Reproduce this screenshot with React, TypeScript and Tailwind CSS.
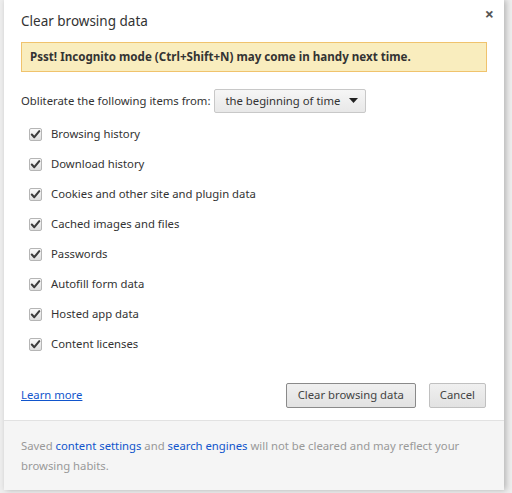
import React from 'react';

const items = [
  'Browsing history',
  'Download history',
  'Cookies and other site and plugin data',
  'Cached images and files',
  'Passwords',
  'Autofill form data',
  'Hosted app data',
  'Content licenses',
];

function CheckBox() {
  return (
    <span className="w-[13px] h-[13px] rounded-[2px] border border-[#b5b5b5] bg-gradient-to-b from-[#fafafa] to-[#dedede] flex items-center justify-center shrink-0">
      <svg width="11" height="11" viewBox="0 0 11 11">
        <path d="M1.8 5.6 L4.3 8.2 L9.3 2.2" fill="none" stroke="#3c3c3c" strokeWidth="2.1" strokeLinecap="round" strokeLinejoin="round" />
      </svg>
    </span>
  );
}

export default function App() {
  return (
    <div
      className="w-[512px] h-[493px] bg-[#eeeeee] pl-[4px] pb-[3px] overflow-hidden text-[11.3px] text-[#333]"
      style={{ fontFamily: '"Segoe UI", "Noto Sans", sans-serif' }}
    >
      <div className="w-[500px] h-[490px] bg-white flex flex-col shadow-[2px_0_6px_rgba(0,0,0,0.25)]">
        <div className="flex-1 px-[17px] pt-[9px] relative">
          <div className="text-[13.5px] text-[#333] leading-[24px]">Clear browsing data</div>
          <button className="absolute right-[10px] top-[6px] text-[#555] text-[16px] font-bold leading-none">×</button>

          <div className="mt-[9px] h-[30px] bg-[#f9edbe] border border-[#f0c36d] px-[8px] flex items-center font-bold text-[11.6px] text-[#333]">
            Psst! Incognito mode (Ctrl+Shift+N) may come in handy next time.
          </div>

          <div className="mt-[17px] flex items-center gap-[4px]">
            <span>Obliterate the following items from:</span>
            <div className="h-[24px] w-[152px] border border-[#c8c8c8] rounded-[2px] bg-gradient-to-b from-[#f6f6f6] to-[#e8e8e8] flex items-center pl-[10px] pr-[7px] justify-between">
              <span>the beginning of time</span>
              <svg width="9" height="6" viewBox="0 0 9 6">
                <path d="M0 0 L9 0 L4.5 5 Z" fill="#222" />
              </svg>
            </div>
          </div>

          <div className="mt-[6px] flex flex-col">
            {items.map((item) => (
              <label key={item} className="h-[30px] flex items-center gap-[9px] pl-[8px]">
                <CheckBox />
                <span>{item}</span>
              </label>
            ))}
          </div>

          <div className="mt-[24px] flex items-center">
            <a className="text-[#15c] underline">Learn more</a>
            <div className="ml-auto flex gap-[13px] pr-[1px]">
              <button className="h-[25px] px-[11px] border border-[#8a8a8a] rounded-[2px] bg-gradient-to-b from-[#f0f0f0] to-[#e2e2e2] text-[#444]">
                Clear browsing data
              </button>
              <button className="h-[25px] px-[10px] border border-[#c0c0c0] rounded-[2px] bg-gradient-to-b from-[#f0f0f0] to-[#e2e2e2] text-[#444]">
                Cancel
              </button>
            </div>
          </div>
        </div>

        <p className="h-[70px] bg-[#f5f5f5] border-t border-[#e2e2e2] px-[17px] pt-[15px] leading-[20px] text-[#999]">
          Saved <a className="text-[#15c]">content settings</a> and <a className="text-[#15c]">search engines</a> will not be
          cleared and may reflect your browsing habits.
        </p>
      </div>
    </div>
  );
}
